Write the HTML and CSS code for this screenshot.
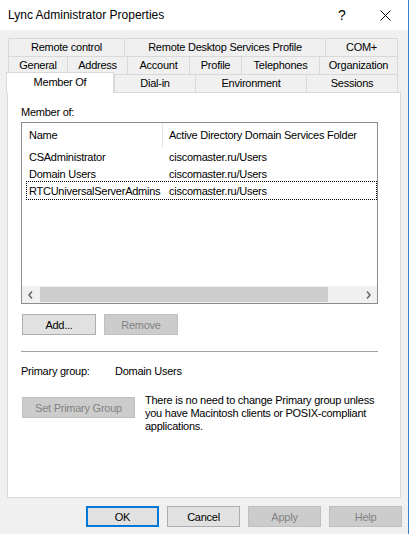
FILE: index.html
```html
<!DOCTYPE html>
<html>
<head>
<meta charset="utf-8">
<link rel="stylesheet" href="styles.css">
</head>
<body>
<div class="window">
  <div class="titlebar">
    <span class="title">Lync Administrator Properties</span>
    <span class="help">?</span>
    <svg class="close" width="11" height="11" viewBox="0 0 11 11"><path d="M0.5 0.5 L10.5 10.5 M10.5 0.5 L0.5 10.5" stroke="#000" stroke-width="1" fill="none"/></svg>
  </div>
  <div class="main">
    <div class="tabs">
      <div class="tabrow">
        <div class="tab w116">Remote control</div>
        <div class="tab w201">Remote Desktop Services Profile</div>
        <div class="tab w73">COM+</div>
      </div>
      <div class="tabrow">
        <div class="tab w59">General</div>
        <div class="tab w60">Address</div>
        <div class="tab w62">Account</div>
        <div class="tab w52">Profile</div>
        <div class="tab w78">Telephones</div>
        <div class="tab w79">Organization</div>
      </div>
      <div class="tabrow last">
        <div class="tab sel">Member Of</div>
        <div class="tab w81">Dial-in</div>
        <div class="tab w111">Environment</div>
        <div class="tab w92">Sessions</div>
      </div>
    </div>
    <div class="panel">
      <div class="lbl">Member of:</div>
      <div class="listview">
        <div class="lv-head">
          <div class="h1">Name</div>
          <div class="h2">Active Directory Domain Services Folder</div>
        </div>
        <div class="lv-body">
          <div class="lv-row"><span class="c1">CSAdministrator</span><span class="c2">ciscomaster.ru/Users</span></div>
          <div class="lv-row"><span class="c1">Domain Users</span><span class="c2">ciscomaster.ru/Users</span></div>
          <div class="lv-row focus"><span class="c1">RTCUniversalServerAdmins</span><span class="c2">ciscomaster.ru/Users</span></div>
        </div>
        <div class="scrollbar">
          <div class="arrow"><svg width="5" height="8" viewBox="0 0 5 8"><path d="M4 0.5 L1 4 L4 7.5" stroke="#606060" stroke-width="1.4" fill="none"/></svg></div>
          <div class="thumb"></div>
          <div class="track"></div>
          <div class="arrow"><svg width="5" height="8" viewBox="0 0 5 8"><path d="M1 0.5 L4 4 L1 7.5" stroke="#606060" stroke-width="1.4" fill="none"/></svg></div>
        </div>
      </div>
      <div class="btnrow">
        <button class="btn w74">Add...</button>
        <button class="btn w74 disabled">Remove</button>
      </div>
      <div class="sep"></div>
      <div class="pgrow">
        <span class="pglabel">Primary group:</span>
        <span>Domain Users</span>
      </div>
      <div class="setrow">
        <button class="btn setbtn disabled">Set Primary Group</button>
        <div class="note">There is no need to change Primary group unless<br>you have Macintosh clients or POSIX-compliant<br>applications.</div>
      </div>
    </div>
    <div class="footer">
      <button class="btn fbtn default">OK</button>
      <button class="btn fbtn">Cancel</button>
      <button class="btn fbtn disabled">Apply</button>
      <button class="btn fbtn disabled">Help</button>
    </div>
  </div>
</div>
</body>
</html>
```
FILE: styles.css
```css
* { box-sizing: border-box; }
html, body { margin: 0; padding: 0; background: #fff; }
body {
  font-family: "Liberation Sans", Arial, sans-serif;
  font-size: 11px;
  letter-spacing: -0.25px;
  color: #000;
}
.window {
  width: 409px;
  height: 534px;
  border-right: 1px solid #3a82d4;
  display: flex;
  flex-direction: column;
}
.titlebar {
  height: 30px;
  flex: none;
  background: #fff;
  display: flex;
  align-items: center;
  padding-left: 8px;
  padding-right: 17px;
}
.title { flex: 1; font-size: 12px; letter-spacing: 0; }
.help { width: 10px; font-size: 14px; text-align: center; letter-spacing: 0; }
.close { margin-left: 33px; }
.main {
  flex: 1;
  background: #f0f0f0;
  padding-top: 8px;
}
.tabs { margin-left: 8px; width: 390px; }
.tabrow { display: flex; height: 18px; }
.tabrow.last { align-items: flex-end; }
.tab {
  height: 18px;
  border: 1px solid #d9d9d9;
  border-bottom: none;
  border-right: none;
  text-align: center;
  line-height: 17px;
  white-space: nowrap;
}
.tab:last-child { border-right: 1px solid #d9d9d9; }
.tab.sel {
  width: 108px;
  height: 21px;
  margin-left: -2px;
  margin-bottom: -1px;
  background: #fff;
  border-right: 1px solid #d9d9d9;
  line-height: 19px;
  position: relative;
  z-index: 1;
}
.w52 { width: 52px; } .w59 { width: 59px; } .w60 { width: 60px; } .w62 { width: 62px; }
.w73 { width: 73px; } .w78 { width: 78px; } .w79 { width: 79px; } .w81 { width: 81px; }
.w92 { width: 92px; } .w111 { width: 111px; } .w116 { width: 116px; } .w201 { width: 201px; }
.w74 { width: 74px; }
.panel {
  margin-left: 7px;
  width: 394px;
  height: 406px;
  background: #fff;
  border: 1px solid #d9d9d9;
  padding: 12px 0 0 13px;
  display: flex;
  flex-direction: column;
}
.lbl { line-height: 14px; }
.listview {
  margin-top: 3px;
  width: 357px;
  height: 182px;
  border: 1px solid #8c8c8c;
  display: flex;
  flex-direction: column;
}
.lv-head { height: 25px; display: flex; flex: none; }
.lv-head .h1 {
  width: 141px;
  padding-left: 7px;
  border-right: 1px solid #e5e5e5;
  line-height: 25px;
}
.lv-head .h2 { padding-left: 6px; line-height: 25px; white-space: nowrap; }
.lv-body { flex: 1; padding-left: 5px; }
.lv-row { display: flex; height: 17px; width: 349px; align-items: center; white-space: nowrap; }
.lv-row .c1 { width: 140px; padding-left: 2px; }
.lv-row .c2 { padding-left: 2px; }
.lv-row.focus { outline: 1px dotted #000; outline-offset: 0; }
.scrollbar { height: 17px; display: flex; background: #f0f0f0; flex: none; }
.arrow { width: 17px; display: flex; align-items: center; justify-content: center; }
.thumb { width: 288px; margin: 1px 0 1px 1px; background: #cdcdcd; }
.track { flex: 1; }
.btn {
  font: inherit;
  letter-spacing: inherit;
  color: #000;
  height: 21px;
  border: 1px solid #adadad;
  background: #e1e1e1;
  padding: 0;
  margin: 0;
}
.btn.disabled { background: #cccccc; border-color: #bfbfbf; color: #838383; }
.btnrow { display: flex; gap: 8px; margin-top: 10px; padding-left: 1px; }
.sep { margin-top: 16px; width: 357px; height: 1px; background: #a0a0a0; }
.pgrow { margin-top: 12px; line-height: 14px; display: flex; }
.pglabel { width: 94px; }
.setrow { margin-top: 16px; display: flex; align-items: flex-start; }
.setbtn { width: 113px; margin-left: 1px; margin-top: 3px; }
.note { margin-left: 10px; line-height: 13px; white-space: nowrap; }
.footer { display: flex; gap: 8px; padding-left: 86px; margin-top: 8px; }
.fbtn { width: 73px; }
.btn.default { border-color: #0078d7; box-shadow: inset 0 0 0 1px #0078d7; }
```
